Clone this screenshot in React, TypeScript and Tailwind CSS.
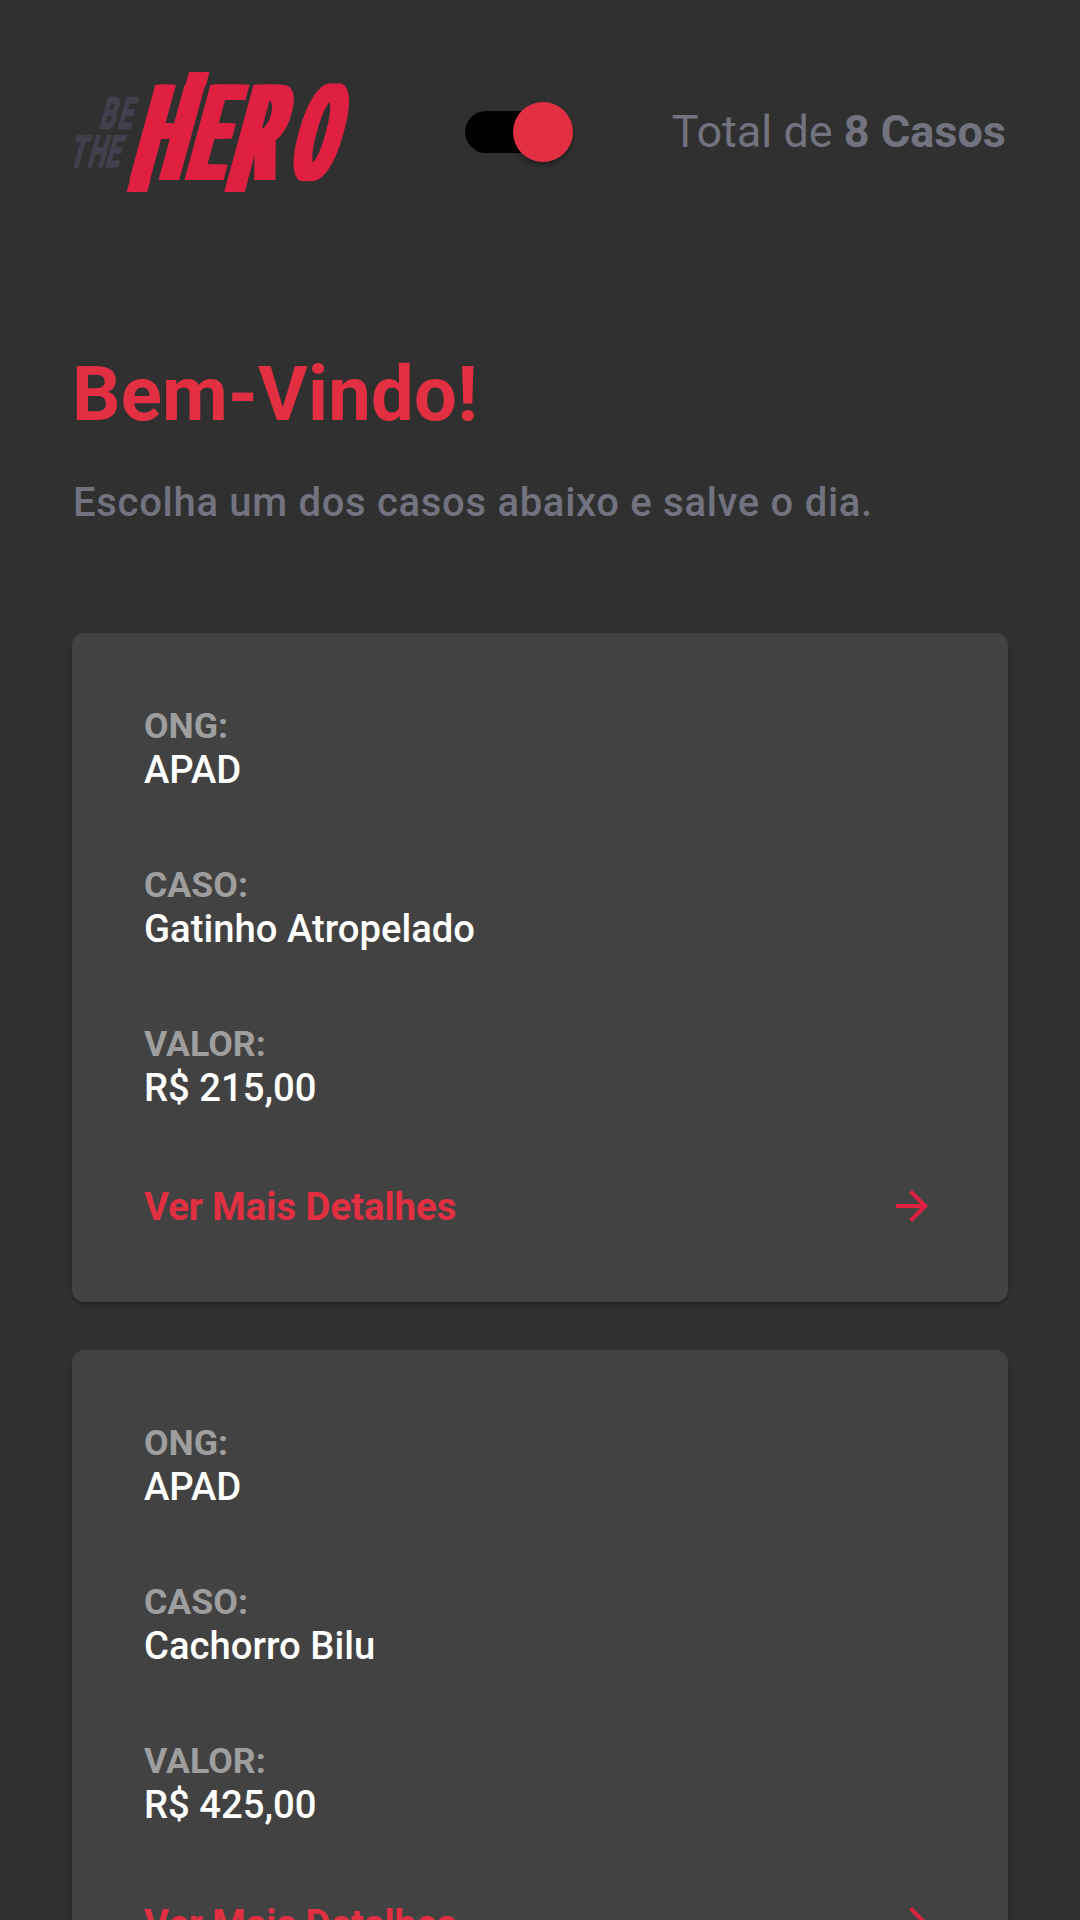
import React from "react";

const cases = [
  { ong: "APAD", title: "Gatinho Atropelado", value: "R$ 215,00" },
  { ong: "APAD", title: "Cachorro Bilu", value: "R$ 425,00" },
];

/* One condensed letter of the word mark; the side shadows thicken its stems. */
function Letter({ children, cell, shape }: { children: string; cell: string; shape: string }) {
  return (
    <span className={`flex shrink-0 justify-center ${cell}`}>
      <span className={`block shrink-0 [text-shadow:5px_0,10.5px_0,-5px_0,-10.5px_0] ${shape}`}>{children}</span>
    </span>
  );
}

function Logo() {
  return (
    <div className="relative h-[120px] w-[284px] shrink-0">
      <svg
        className="absolute inset-0 overflow-visible"
        width="284"
        height="120"
        viewBox="0 0 284 120"
        fontFamily="Roboto"
      >
        <g transform="translate(0 108) skewX(-15.3)">
          <g fill="#41414d" stroke="#41414d" strokeWidth="3" fontWeight="500">
            <text transform="translate(0 -52.5) scale(0.58 1)" x="21.5 53" y="0" fontSize="42">BE</text>
            <text transform="translate(0 -13.8) scale(0.58 1)" x="-11.5 19 50" y="0" fontSize="42">THE</text>
          </g>
          {/* stem extensions above and below the word */}
          <g fill="#e02041">
            <rect x="58" y="-1" width="20.5" height="13" />
            <rect x="87.5" y="-108" width="20.5" height="14" />
            <rect x="155.5" y="-1" width="20.5" height="13" />
          </g>
        </g>
      </svg>
      <div className="absolute top-[15px] left-[58px] flex origin-[0_93px] skew-x-[-15.3deg] text-[134px] leading-[95px] font-bold text-[#e02041]">
        <Letter cell="-ml-px w-[50px]" shape="scale-x-[0.505]">H</Letter>
        <Letter cell="ml-1 w-[39px]" shape="scale-x-[0.46]">E</Letter>
        <Letter cell="ml-[3px] w-[49px]" shape="scale-x-[0.5]">R</Letter>
        <Letter cell="ml-[11px] w-[47px]" shape="scale-x-[0.44]">O</Letter>
      </div>
    </div>
  );
}

function Switch() {
  return (
    <div className="ml-[109px] flex h-[60px] w-[108px] shrink-0 items-center">
      <div className="h-[42px] w-[99px] shrink-0 rounded-full bg-black" />
      <div className="-ml-[51px] size-[60px] shrink-0 rounded-full bg-[#e23042] shadow-[0_3px_5px_rgba(0,0,0,0.35)]" />
    </div>
  );
}

function Field({ label, value }: { label: string; value: string }) {
  return (
    <div>
      <div className="text-[35.7px] leading-[42px] font-bold text-[#9e9e9e]">{label}</div>
      <div className="text-[38.25px] leading-[46px] font-medium text-white">{value}</div>
    </div>
  );
}

function CaseCard({ item }: { item: (typeof cases)[number] }) {
  return (
    <article className="flex h-[669px] shrink-0 flex-col gap-[71px] rounded-xl bg-[#424242] p-[72px] shadow-[0_3px_4px_-1px_rgba(0,0,0,0.35)]">
      <Field label="ONG:" value={item.ong} />
      <Field label="CASO:" value={item.title} />
      <Field label="VALOR:" value={item.value} />
      <div className="flex h-12 items-center justify-between">
        <span className="mt-0.5 text-[38.25px] leading-[46px] font-bold text-[#e23042]">Ver Mais Detalhes</span>
        <svg className="size-12" viewBox="0 0 24 24" fill="#e02041">
          <path d="M12 4l-1.41 1.41L16.17 11H4v2h12.17l-5.58 5.59L12 20l8-8z" />
        </svg>
      </div>
    </article>
  );
}

export default function App() {
  return (
    <main className="flex h-[1920px] w-[1080px] flex-col overflow-hidden bg-[#303030] px-[72px] pt-[72px] font-['Roboto',sans-serif]">
      <header className="flex h-[120px] shrink-0 items-center">
        <Logo />
        <Switch />
        <p className="mr-0.5 mb-px ml-auto text-[45px] leading-[53px] whitespace-nowrap text-[#737380]">
          Total de <b className="font-bold">8 Casos</b>
        </p>
      </header>
      <h1 className="mt-[158px] shrink-0 text-[76px] leading-[88px] font-bold tracking-[0.2px] text-[#e23042]">Bem-Vindo!</h1>
      <p className="mt-[41px] shrink-0 pl-px text-[40px] leading-[47px] font-medium tracking-[0.7px] text-[#737380]">
        Escolha um dos casos abaixo e salve o dia.
      </p>
      <section className="mt-[107px] flex flex-col gap-12">
        {cases.map((item) => (
          <CaseCard key={item.title} item={item} />
        ))}
      </section>
    </main>
  );
}
